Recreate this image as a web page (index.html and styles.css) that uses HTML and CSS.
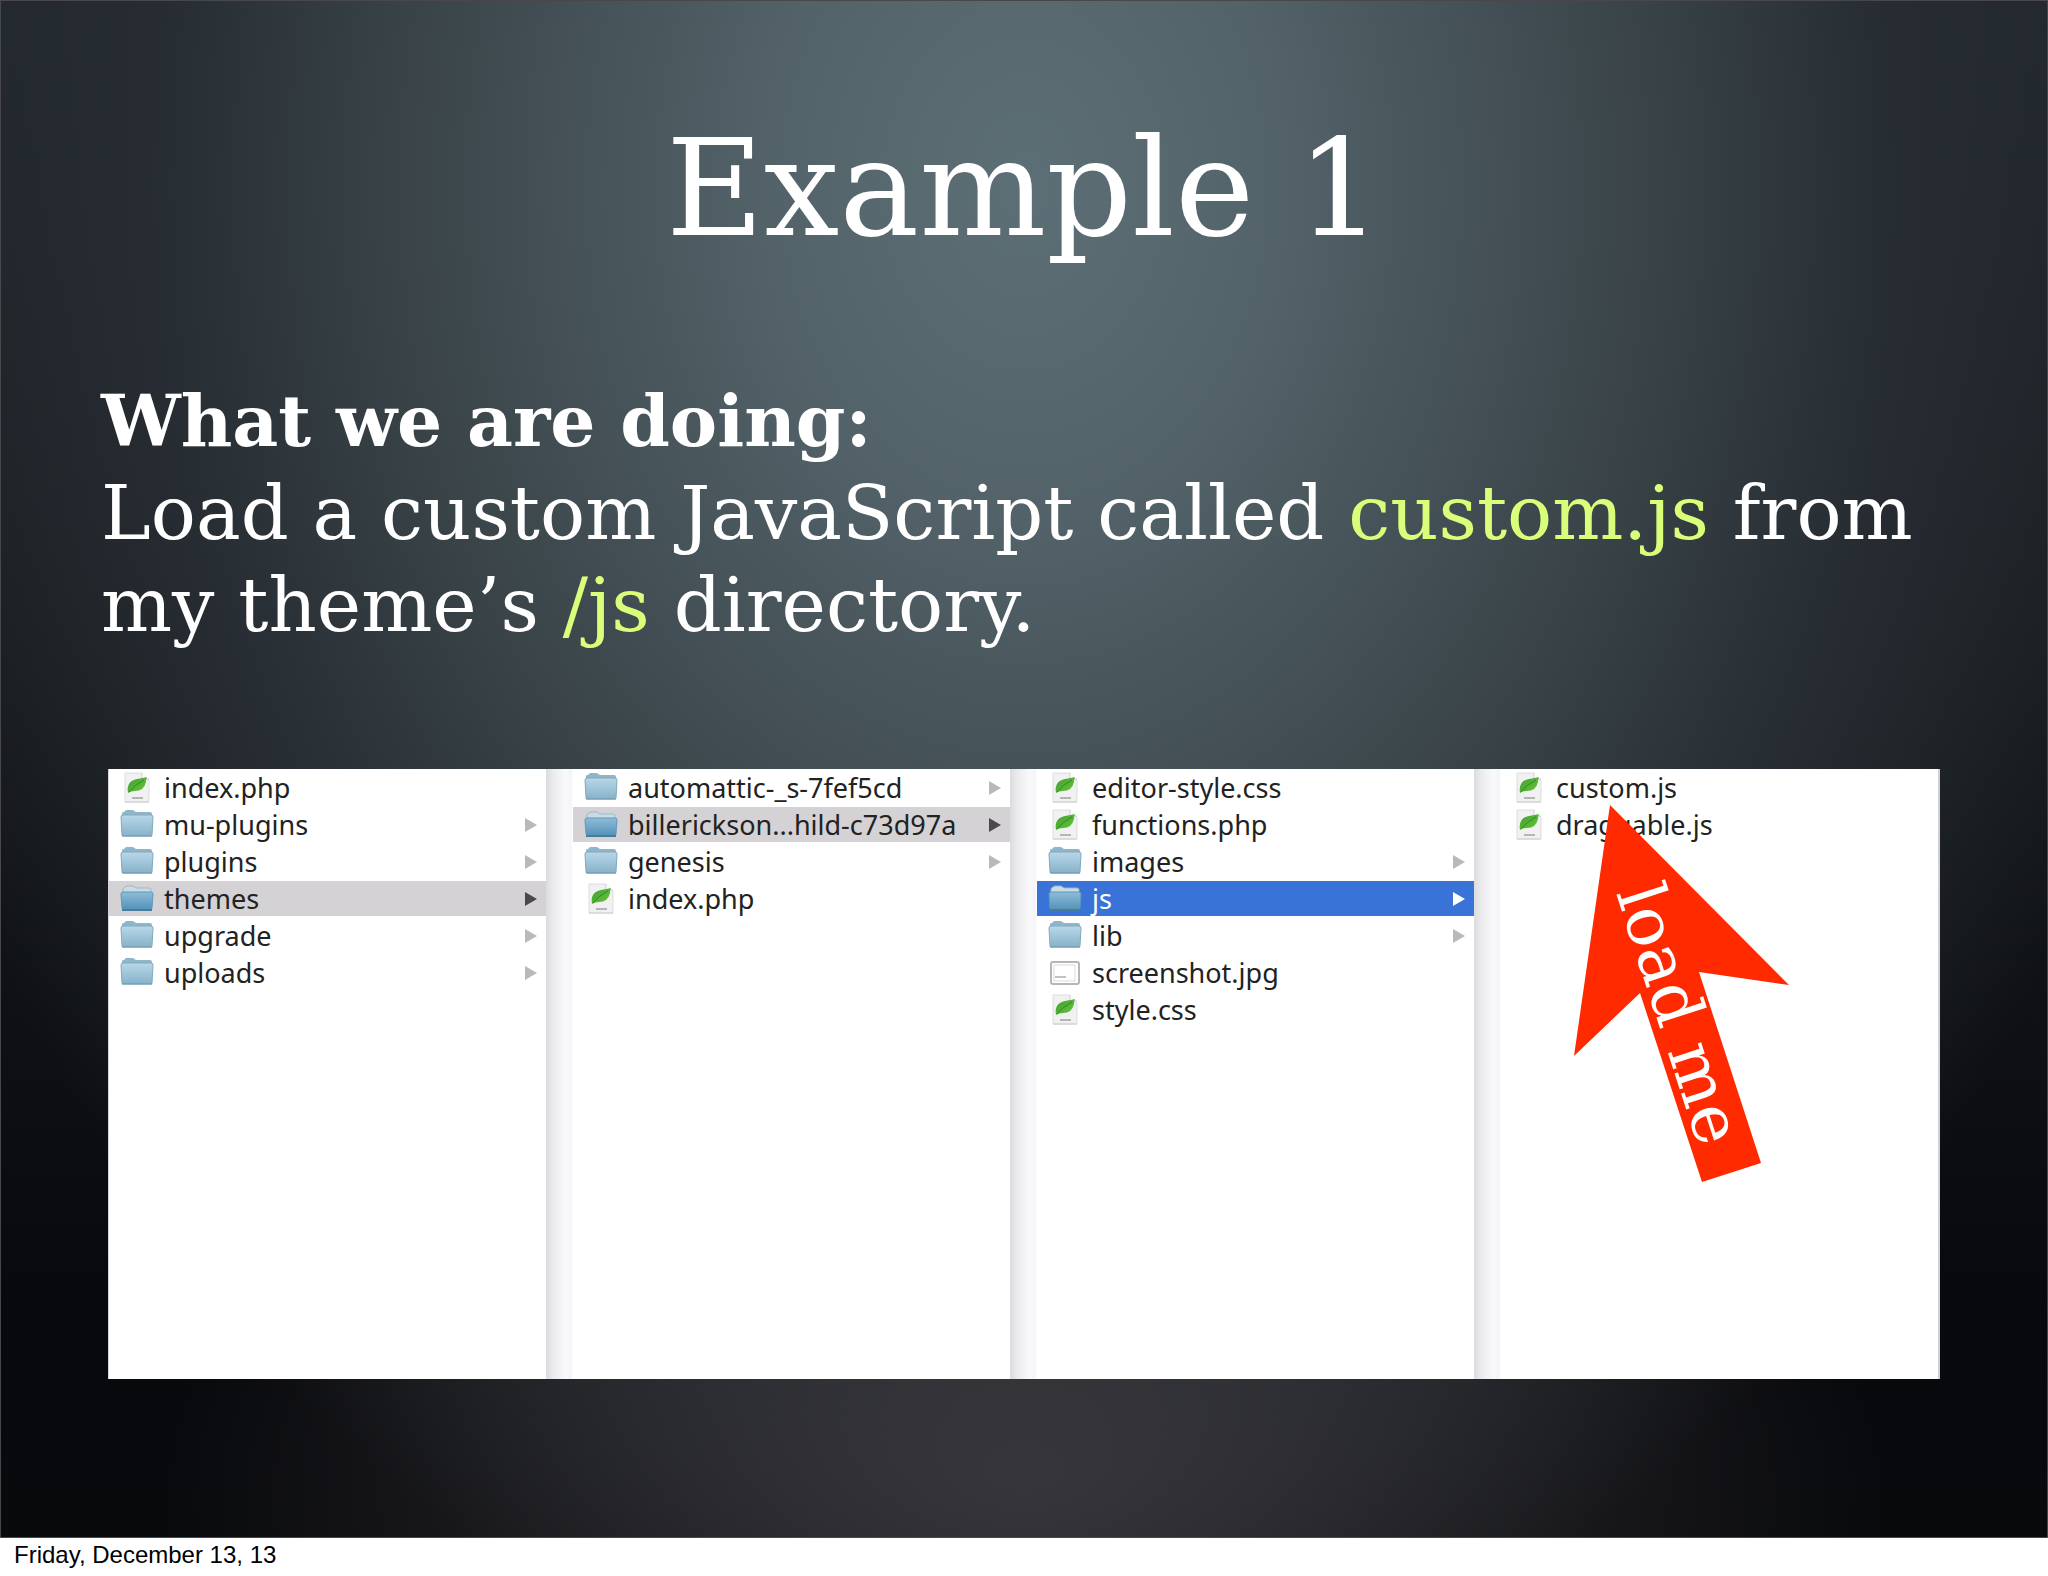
FILE: index.html
```html
<!DOCTYPE html>
<html lang="en">
<head>
    <meta charset="UTF-8">
    <meta name="viewport" content="width=device-width, initial-scale=1.0">
    <title>Example 1</title>
    <link rel="stylesheet" href="styles.css">
</head>
<body>
    <!-- icons used in the file browser -->
    <svg class="sprite" aria-hidden="true">
        <defs>
            <linearGradient id="folderFill" x1="0" y1="0" x2="0" y2="1">
                <stop offset="0" stop-color="#b9d7e8"/>
                <stop offset="1" stop-color="#86b2ca"/>
            </linearGradient>
            <linearGradient id="openFill" x1="0" y1="0" x2="0" y2="1">
                <stop offset="0" stop-color="#8fbcd8"/>
                <stop offset="1" stop-color="#5593b9"/>
            </linearGradient>
            <linearGradient id="leafFill" x1="0" y1="0" x2="1" y2="1">
                <stop offset="0" stop-color="#3f9f2c"/>
                <stop offset="1" stop-color="#68c63f"/>
            </linearGradient>
            <symbol id="folder" viewBox="0 0 34 32">
                <path d="M2 8V4q0-1 2-1l2-2h7l3 2h14q2 0 2 2v4z" fill="#8fb5c8"/>
                <path d="M1 8q0-2 2-2h28q2 0 2 2l-1 18q0 1-1 1H3q-1 0-1-1z" fill="url(#folderFill)" stroke="#82a9bd"/>
                <path d="M2 27h30" stroke="#7196aa"/>
            </symbol>
            <symbol id="folder-open" viewBox="0 0 34 32">
                <path d="M3 10V6q0-1 2-2l2-1h6l3 2h13q2 0 2 2v3z" fill="#c9dbe4" stroke="#9bb8c7"/>
                <path d="M1 11q0-2 2-2h28q2 0 2 2l-1 14q0 1-1 1H3q-1 0-1-1z" fill="url(#openFill)" stroke="#5f99bb"/>
                <path d="M2 27h30" stroke="#477b9b" stroke-width="2"/>
            </symbol>
            <symbol id="file" viewBox="0 0 34 32">
                <path d="M5 1h17l7 7v22H5z" fill="#f1f1f1" stroke="#dddddd"/>
                <path d="M22 1v6h7" fill="#fff" stroke="#cfcfcf"/>
                <path d="M8 21Q6 9 17 7q6-1 10-2-1 2-1 5-2 9-11 9-4 0-7 2z" fill="url(#leafFill)"/>
                <path d="M9 20Q14 13 24 8" fill="none" stroke="#2f8a22"/>
                <path d="M12 26h11" stroke="#b5b5b5" stroke-width="2"/>
                <path d="M5 30h24" stroke="#cccccc"/>
            </symbol>
            <symbol id="image" viewBox="0 0 34 32">
                <rect x="3" y="5" width="28" height="22" rx="2" fill="#fff" stroke="#b9b4b9" stroke-width="2"/>
                <rect x="6" y="8" width="21" height="16" fill="#fff" stroke="#dedbde"/>
                <path d="M7 20h11" stroke="#c4c0c4" stroke-width="2"/>
            </symbol>
            <symbol id="arrow" viewBox="0 0 12 14">
                <path d="M0 0l12 7-12 7z" fill="currentColor"/>
            </symbol>
        </defs>
    </svg>

    <main class="slide">
        <h1>Example 1</h1>

        <div class="intro">
            <h2>What we are doing:</h2>
            <p>Load a custom JavaScript called <span class="hl">custom.js</span> from<br>
            my theme’s <span class="hl">/js</span> directory.</p>
        </div>

        <div class="finder">
            <ul class="column">
                <li><svg class="icon"><use href="#file"/></svg><span>index.php</span></li>
                <li><svg class="icon"><use href="#folder"/></svg><span>mu-plugins</span><svg class="arrow"><use href="#arrow"/></svg></li>
                <li><svg class="icon"><use href="#folder"/></svg><span>plugins</span><svg class="arrow"><use href="#arrow"/></svg></li>
                <li class="open"><svg class="icon"><use href="#folder-open"/></svg><span>themes</span><svg class="arrow"><use href="#arrow"/></svg></li>
                <li><svg class="icon"><use href="#folder"/></svg><span>upgrade</span><svg class="arrow"><use href="#arrow"/></svg></li>
                <li><svg class="icon"><use href="#folder"/></svg><span>uploads</span><svg class="arrow"><use href="#arrow"/></svg></li>
            </ul>
            <div class="divider"></div>
            <ul class="column">
                <li><svg class="icon"><use href="#folder"/></svg><span>automattic-_s-7fef5cd</span><svg class="arrow"><use href="#arrow"/></svg></li>
                <li class="open"><svg class="icon"><use href="#folder-open"/></svg><span>billerickson...hild-c73d97a</span><svg class="arrow"><use href="#arrow"/></svg></li>
                <li><svg class="icon"><use href="#folder"/></svg><span>genesis</span><svg class="arrow"><use href="#arrow"/></svg></li>
                <li><svg class="icon"><use href="#file"/></svg><span>index.php</span></li>
            </ul>
            <div class="divider"></div>
            <ul class="column">
                <li><svg class="icon"><use href="#file"/></svg><span>editor-style.css</span></li>
                <li><svg class="icon"><use href="#file"/></svg><span>functions.php</span></li>
                <li><svg class="icon"><use href="#folder"/></svg><span>images</span><svg class="arrow"><use href="#arrow"/></svg></li>
                <li class="selected"><svg class="icon"><use href="#folder-open"/></svg><span>js</span><svg class="arrow"><use href="#arrow"/></svg></li>
                <li><svg class="icon"><use href="#folder"/></svg><span>lib</span><svg class="arrow"><use href="#arrow"/></svg></li>
                <li><svg class="icon"><use href="#image"/></svg><span>screenshot.jpg</span></li>
                <li><svg class="icon"><use href="#file"/></svg><span>style.css</span></li>
            </ul>
            <div class="divider"></div>
            <ul class="column">
                <li><svg class="icon"><use href="#file"/></svg><span>custom.js</span></li>
                <li><svg class="icon"><use href="#file"/></svg><span>draggable.js</span></li>
            </ul>

            <svg class="pointer" viewBox="0 0 222 384">
                <polygon points="40,4 219,184 129,171 191,362 132,381 70,192 4,255" fill="#ff2a00"/>
                <text transform="translate(46 92) rotate(72)">load me</text>
            </svg>
        </div>
    </main>

    <footer>Friday, December 13, 13</footer>
</body>
</html>
```

FILE: styles.css
```css
* {
    box-sizing: border-box;
}
body {
    margin: 0;
    min-height: 100vh;
    display: flex;
    flex-direction: column;
    background-color: #fff;
}
.sprite {
    position: absolute;
    width: 0;
    height: 0;
}
.slide {
    flex: 1;
    padding: 102px 100px 0;
    border: 1px solid #48484a;
    color: #fff;
    font-family: "American Typewriter", "DejaVu Serif", serif;
    background:
        radial-gradient(ellipse 42% 30% at 50% 96%, rgba(60, 58, 63, 0.85), rgba(60, 58, 63, 0) 100%),
        radial-gradient(ellipse 58% 100% at 50% 12%, #5d6f76 0%, #526268 22%, #3d484d 48%, #262c31 74%, rgba(20, 23, 27, 0) 100%),
        linear-gradient(#20272c 0%, #171b1f 40%, #08090c 85%, #090a0c 100%);
}
h1 {
    margin: 0;
    font-size: 134px;
    font-weight: normal;
    line-height: 172px;
    text-align: center;
}
.intro {
    margin-top: 100px;
    font-size: 75px;
    line-height: 92px;
}
.intro h2 {
    margin: 0;
    font-size: 71px;
}
.intro p {
    margin: 0;
    white-space: nowrap;
}
.hl {
    color: #d9ff7a;
}
.finder {
    position: relative;
    display: grid;
    grid-template-columns: 1fr 27px 1fr 27px 1fr 27px 1fr;
    min-height: 610px;
    margin: 118px 7px 0;
    border-left: 1px solid #d4d4da;
    border-right: 2px solid #cfcfd8;
    background-color: #fff;
    color: #222;
    font-family: "Lucida Grande", "Noto Sans", sans-serif;
    font-size: 27px;
}
.column {
    margin: 0;
    padding: 1px 0 0;
    list-style: none;
}
.column li {
    display: flex;
    align-items: center;
    gap: 10px;
    height: 35px;
    margin-bottom: 2px;
    padding: 0 9px 0 11px;
    white-space: nowrap;
}
.icon {
    width: 34px;
    height: 32px;
    flex: none;
}
.arrow {
    width: 12px;
    height: 14px;
    margin-left: auto;
    flex: none;
    color: #b9b9b9;
}
.column .open {
    background-color: #d4d2d4;
}
.open .arrow {
    color: #4a4a4a;
}
.column .selected {
    background-color: #3973d8;
    color: #fff;
}
.selected .arrow {
    color: #fff;
}
.divider {
    background: linear-gradient(to right, #dcdcdf, #ececee 30%, #fafafc 75%, #f4f4f7 92%, #fff);
}
/* callout lying over the last column */
.pointer {
    position: absolute;
    top: 32px;
    right: 146px;
    width: 222px;
    height: 384px;
}
.pointer text {
    fill: #fff;
    font-family: "American Typewriter", "DejaVu Serif", serif;
    font-size: 67px;
}
footer {
    padding: 0 14px 4px;
    color: #000;
    font-family: Helvetica, "Liberation Sans", Arial, sans-serif;
    font-size: 24px;
    line-height: 34px;
}
```
